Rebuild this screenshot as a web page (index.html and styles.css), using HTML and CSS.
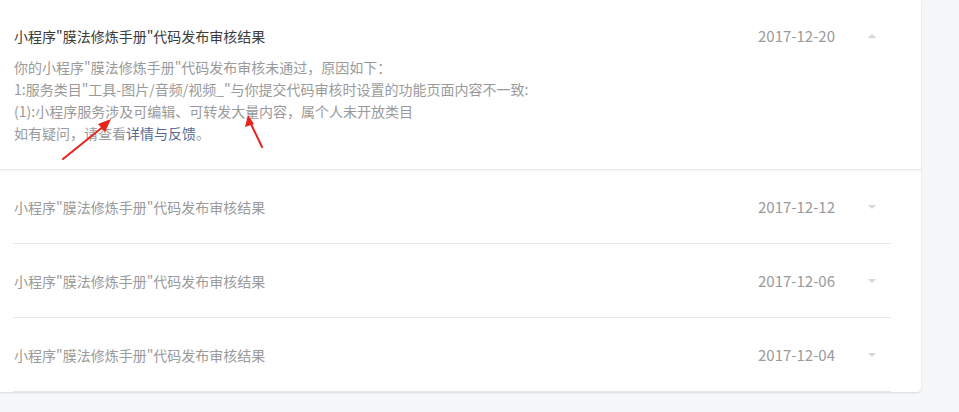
FILE: index.html
```html
<!DOCTYPE html>
<html lang="zh-CN">

<head>
    <meta charset="UTF-8">
    <meta name="viewport" content="width=device-width, initial-scale=1.0">
    <title>审核结果</title>
    <link rel="stylesheet" href="styles.css">
</head>

<body>
    <div class="page">
        <div class="card">
            <!-- 展开的消息 -->
            <div class="msg open">
                <div class="msg-head">
                    <span class="msg-title">小程序"膜法修炼手册"代码发布审核结果</span>
                    <span class="msg-date">2017-12-20</span>
                    <span class="toggle up"></span>
                </div>
                <div class="msg-body">
                    <p>你的小程序"膜法修炼手册"代码发布审核未通过，原因如下：</p>
                    <p>1:服务类目"工具-图片/音频/视频_"与你提交代码审核时设置的功能页面内容不一致:</p>
                    <p>(1):小程序服务涉及可编辑、可转发大量内容，属个人未开放类目</p>
                    <p>如有疑问，请查看<a href="#">详情与反馈</a>。</p>
                </div>
                <svg class="marks" width="300" height="170" viewBox="0 0 300 170">
                    <line x1="63" y1="159" x2="104" y2="126" stroke="#e8231b" stroke-width="2" stroke-linecap="round" />
                    <polygon points="111,119 98,124 105,132" fill="#e8231b" />
                    <line x1="262" y1="147" x2="251" y2="124" stroke="#e8231b" stroke-width="2" stroke-linecap="round" />
                    <polygon points="248,115 245,127 254,124" fill="#e8231b" />
                </svg>
            </div>

            <ul class="list">
                <li class="msg-head row">
                    <span class="msg-title">小程序"膜法修炼手册"代码发布审核结果</span>
                    <span class="msg-date">2017-12-12</span>
                    <span class="toggle"></span>
                </li>
                <li class="msg-head row">
                    <span class="msg-title">小程序"膜法修炼手册"代码发布审核结果</span>
                    <span class="msg-date">2017-12-06</span>
                    <span class="toggle"></span>
                </li>
                <li class="msg-head row">
                    <span class="msg-title">小程序"膜法修炼手册"代码发布审核结果</span>
                    <span class="msg-date">2017-12-04</span>
                    <span class="toggle"></span>
                </li>
            </ul>
        </div>
    </div>
</body>

</html>
```

FILE: styles.css
```css
body {
    margin: 0;
    font-family: "Noto Sans CJK SC", "Noto Sans", sans-serif;
    font-size: 14px;
    background-color: #f5f7f9;
    color: #9a9a9a;
}

.page {
    padding: 0 38px 21px 0;
}

.card {
    width: 921px;
    background-color: #fff;
    border-radius: 0 0 4px 0;
    box-shadow: 0 1px 2px rgba(0, 0, 0, 0.12);
}

.msg {
    position: relative;
}

.msg.open {
    padding: 0 45px 25px 14px;
    border-bottom: 1px solid #e9e9e9;
    box-shadow: 0 1px 2px rgba(0, 0, 0, 0.05);
}

.msg-head {
    display: flex;
    align-items: center;
    line-height: 20px;
}

.open .msg-head {
    padding-top: 26px;
}

.msg-title {
    flex: 1;
}

.open .msg-title {
    color: #3c3c3c;
}

.msg-date {
    color: #9a9a9a;
    font-size: 15px;
}

/* 小三角 */
.toggle {
    width: 0;
    height: 0;
    margin-left: 33px;
    border-left: 4px solid transparent;
    border-right: 4px solid transparent;
    border-top: 4px solid #d6d6d6;
}

.toggle.up {
    border-top: 0;
    border-bottom: 4px solid #d6d6d6;
}

.msg-body {
    margin-top: 10px;
    line-height: 22px;
}

.msg-body p {
    margin: 0;
}

.msg-body a {
    color: #576b95;
    text-decoration: none;
}

.marks {
    position: absolute;
    top: 0;
    left: 0;
}

.list {
    list-style: none;
    margin: 0 30px 0 13px;
    padding: 0;
}

.row {
    height: 73px;
    padding: 0 15px 0 1px;
    border-bottom: 1px solid #e7e7e7;
}
```
